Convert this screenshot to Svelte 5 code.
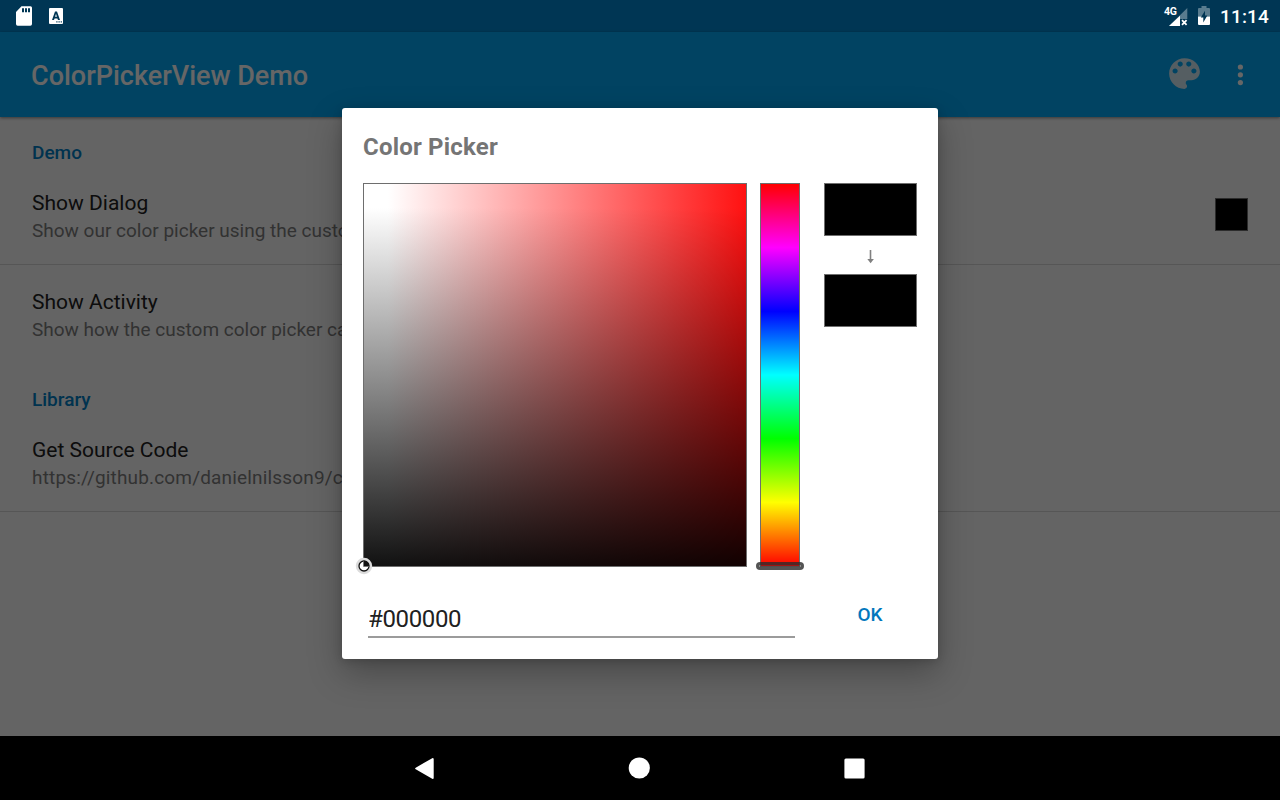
<script>
  const sections = [
    {
      title: 'Demo',
      items: [
        { title: 'Show Dialog', summary: 'Show our color picker using the custom', swatch: '#000000', line: true },
        { title: 'Show Activity', summary: 'Show how the custom color picker can', line: false },
      ],
    },
    {
      title: 'Library',
      items: [{ title: 'Get Source Code', summary: 'https://github.com/danielnilsson9/co', line: true, link: true }],
    },
  ];
  let color = $state('#000000');
</script>

<div class="screen">
  <div class="app">
    <div class="status-bg"></div>
    <header>
      <h1>ColorPickerView Demo</h1>
      <svg class="palette" viewBox="0 0 24 24" width="41" height="41" aria-hidden="true">
        <path d="M12 3c-4.97 0-9 4.03-9 9s4.03 9 9 9c.83 0 1.500-.67 1.500-1.500 0-.39-.15-.74-.39-1.010-.23-.26-.38-.61-.38-.99 0-.83.67-1.500 1.500-1.500H16c2.760 0 5-2.240 5-5 0-4.420-4.030-8-9-8zm-5.500 9c-.83 0-1.500-.67-1.500-1.500S5.670 9 6.500 9 8 9.670 8 10.500 7.330 12 6.500 12zm3-4C8.670 8 8 7.330 8 6.500S8.670 5 9.500 5s1.500.67 1.500 1.500S10.330 8 9.500 8zm5 0c-.83 0-1.500-.67-1.500-1.500S13.670 5 14.500 5s1.500.67 1.500 1.500S15.330 8 14.500 8zm3 4c-.83 0-1.500-.67-1.500-1.500S16.670 9 17.500 9s1.500.67 1.500 1.500-.67 1.500-1.500 1.500z" />
      </svg>
      <svg class="more" viewBox="0 0 6 22" width="6" height="22" aria-hidden="true">
        <circle cx="3.400" cy="3" r="2.600" /><circle cx="3.400" cy="10.800" r="2.600" /><circle cx="3.400" cy="18.600" r="2.600" />
      </svg>
    </header>
    <main>
      {#each sections as section}
        <section>
          <h2>{section.title}</h2>
          {#each section.items as item}
            <div class="row" class:line={item.line}>
              <div class="label">
                <div class="name">{item.title}</div>
                <div class="summary" class:link={item.link}>{item.summary}</div>
              </div>
              {#if item.swatch}
                <div class="swatch" style="background:{item.swatch}"></div>
              {/if}
            </div>
          {/each}
        </section>
      {/each}
    </main>
  </div>

  <div class="scrim"></div>

  <div class="status">
    <svg width="16" height="20" viewBox="0 0 16 20" aria-hidden="true">
      <path fill="#fff" fill-rule="evenodd" d="M5.500 .3H14.500a1.500 1.500 0 0 1 1.500 1.500V18a1.700 1.700 0 0 1-1.700 1.700H1.700A1.700 1.700 0 0 1 0 18V6zM6 2.200v4h2v-4zm3 0v4h2v-4zm3 0v4h2v-4z" />
    </svg>
    <svg class="ime" width="14" height="16" viewBox="0 0 14 16" aria-hidden="true">
      <path fill="#fff" fill-rule="evenodd" d="M1 0h12a1 1 0 0 1 1 1v14a1 1 0 0 1-1 1H1a1 1 0 0 1-1-1V1a1 1 0 0 1 1-1zM6 3.500L3 12h2l.6-1.600h2.800L9 12h2L8 3.500zm1 2.300l.9 3H6.100zM7.300 13.300v1.200h1.200v-1.200zm2.200 0v1.200h1.200v-1.200zm2.200 0v1.200h1.200v-1.200z" />
    </svg>
    <div class="spring"></div>
    <div class="signal">
      <svg width="24" height="18" viewBox="0 0 24 18" aria-hidden="true">
        <path d="M23.300 0V11H16v7H5z" fill="#fff" fill-opacity=".35" />
        <path d="M16 7.700V18H5z" fill="#fff" />
        <path d="M18 12.200l4.600 4.600m0-4.600l-4.600 4.600" stroke="#fff" stroke-width="1.800" />
      </svg>
      <span>4G</span>
    </div>
    <svg class="battery" width="12" height="19" viewBox="0 0 12 19" aria-hidden="true">
      <path d="M3.500 0h5v2H11a1 1 0 0 1 1 1v7.500H0V3a1 1 0 0 1 1-1h2.500z" fill="#fff" fill-opacity=".35" />
      <path d="M0 10.500h12V18a1 1 0 0 1-1 1H1a1 1 0 0 1-1-1z" fill="#fff" />
      <path d="M7 4.800L2.800 11.400h2.500v5l4-6.900H7z" fill="#013654" />
    </svg>
    <time>11:14</time>
  </div>

  <div class="dialog">
    <h3>Color Picker</h3>
    <div class="picker">
      <div class="field">
        <svg class="knob" width="18" height="18" viewBox="0 0 18 18" aria-hidden="true">
          <circle cx="9" cy="9" r="6.700" fill="none" stroke="#dcdcdc" stroke-width="3" />
          <circle cx="9" cy="9" r="5" fill="#fff" stroke="#111" stroke-width="1.300" />
          <path d="M9 9V4a5 5 0 0 1 5 5z" fill="#111" />
          <path d="M8.500 4.500V9.500H13.500" fill="none" stroke="#777" stroke-width="1" />
        </svg>
      </div>
      <div class="hue"><div class="slider"></div></div>
      <div class="compare">
        <div class="panel" style="background:{color}"></div>
        <svg width="8" height="14" viewBox="0 0 8 14" aria-hidden="true">
          <path d="M3.500 0V11" stroke="#808080" stroke-width="1.600" fill="none" />
          <path d="M.3 9h6.600L3.600 13.200z" fill="#808080" />
        </svg>
        <div class="panel" style="background:{color}"></div>
      </div>
    </div>
    <div class="actions">
      <input type="text" bind:value={color} spellcheck="false" />
      <button>OK</button>
    </div>
  </div>

  <nav>
    <svg width="20" height="24" viewBox="0 0 20 24" aria-hidden="true">
      <path d="M2.200 12.500L18.700 3V22z" fill="#fff" stroke="#fff" stroke-width="2" stroke-linejoin="round" />
    </svg>
    <svg class="home" width="22" height="22" viewBox="0 0 22 22" aria-hidden="true"><circle cx="11.300" cy="11" r="10.600" fill="#fff" /></svg>
    <svg class="recent" width="21" height="21" viewBox="0 0 21 21" aria-hidden="true"><rect x=".4" y=".4" width="20.200" height="20.200" rx="1.500" fill="#fff" /></svg>
  </nav>
</div>

<style>
  :global(body) { margin: 0; }
  .screen { position: relative; width: 1280px; height: 800px; overflow: hidden; font-family: Roboto, sans-serif; display: flex; flex-direction: column; }
  .screen * { box-sizing: border-box; }
  .app { height: 736px; background: #fafafa; display: flex; flex-direction: column; }
  .status-bg { height: 32px; background: #0288d1; }
  header { height: 85px; flex: none; display: flex; align-items: center; padding: 0 37px 0 31px; background: #03a9f4; box-shadow: 0 1px 3px rgba(0, 0, 0, .45); z-index: 1; }
  h1 { flex: 1; margin: 3px 0 0; font-size: 27px; font-weight: 500; color: #fff; line-height: 32px; }
  .palette { fill: #d5eaf4; margin-right: 32px; margin-top: -2px; }
  .more { fill: #fff; }
  main { padding-top: 1px; }
  section { padding-top: 1px; }
  section + section { padding-top: 0; margin-top: 2px; }
  h2 { margin: 0; height: 54px; padding: 21px 32px 0; font-size: 19px; line-height: 26px; font-weight: 500; color: #027fc6; }
  .row { display: flex; align-items: center; justify-content: space-between; height: 99px; padding: 0 32px; border-bottom: 1px solid transparent; }
  .row:first-of-type { height: 92px; padding-bottom: 8px; }
  .row.line { border-bottom-color: #d8d8d8; }
  .label { padding-top: 3px; }
  .name { font-size: 21px; line-height: 28px; color: #212121; }
  .summary { font-size: 19px; line-height: 27px; color: #7e7e7e; white-space: nowrap; }
  .link { letter-spacing: .17px; }
  .swatch { width: 33px; height: 33px; border: 1px solid #6e6e6e; }
  .scrim { position: absolute; inset: 0 0 64px; background: rgba(0, 0, 0, .6); z-index: 2; }
  .status { position: absolute; top: 0; left: 0; right: 0; height: 32px; z-index: 3; display: flex; align-items: center; padding: 0 11px 0 16px; color: #fff; }
  .ime { margin-left: 17px; }
  .spring { flex: 1; }
  .signal { position: relative; width: 24px; height: 18px; margin-right: 10px; }
  .signal svg { display: block; margin-top: 1px; }
  .signal span { position: absolute; left: 0; top: -2px; font-size: 10.500px; line-height: 13px; font-weight: 700; letter-spacing: -.4px; }
  .battery { margin-right: 10px; margin-top: -2px; }
  time { font-size: 19px; font-weight: 500; line-height: 32px; letter-spacing: .15px; padding-top: 1px; }
  .dialog { position: absolute; left: 342px; top: 108px; width: 596px; height: 551px; z-index: 4; background: #fff; border-radius: 3px; padding: 0 21px; box-shadow: 0 14px 34px rgba(0, 0, 0, .28), 0 2px 10px rgba(0, 0, 0, .16); }
  h3 { margin: 0; height: 75px; padding-top: 23px; line-height: 32px; font-size: 24px; font-weight: 700; letter-spacing: .2px; color: #757575; }
  .picker { display: flex; height: 384px; }
  .field { position: relative; width: 384px; height: 384px; border: 1px solid #6e6e6e; background: linear-gradient(to bottom, #fff 24px, #000 408px), linear-gradient(to right, #fff 24px, #f00 408px); background-blend-mode: multiply; }
  .knob { position: absolute; left: -9px; bottom: -9px; }
  .hue { position: relative; width: 40px; margin-left: 13px; border: 1px solid #6e6e6e; background: linear-gradient(#f00, #f0f, #00f, #0ff, #0f0, #ff0, #f00); }
  .slider { position: absolute; left: -5px; right: -5px; bottom: -4px; height: 8px; border: 3px solid rgba(45, 45, 45, .66); border-radius: 4px; background: rgba(40, 40, 40, .45); }
  .compare { width: 93px; margin-left: 24px; display: flex; flex-direction: column; align-items: center; }
  .panel { width: 93px; height: 53px; border: 1px solid #6e6e6e; }
  .compare svg { margin: 14px 0 10px; }
  .actions { display: flex; align-items: flex-start; padding: 31px 0 0 5px; }
  input { width: 427px; height: 40px; padding: 4px 1px 0; border: 0; border-bottom: 2px solid #9b9b9b; outline: 0; background: none; font: 24px/32px Roboto, sans-serif; letter-spacing: -.35px; text-indent: -1px; color: #212121; }
  button { width: 86px; margin-left: 32px; padding: 1px 0 0; border: 0; background: none; font: 500 19px/32px Roboto, sans-serif; color: #0277bd; }
  nav { height: 64px; background: #000; display: flex; justify-content: center; align-items: center; gap: 194px; padding-right: 1px; }
  .home { margin-top: -1px; }
  .recent { margin-top: 1px; }
</style>
